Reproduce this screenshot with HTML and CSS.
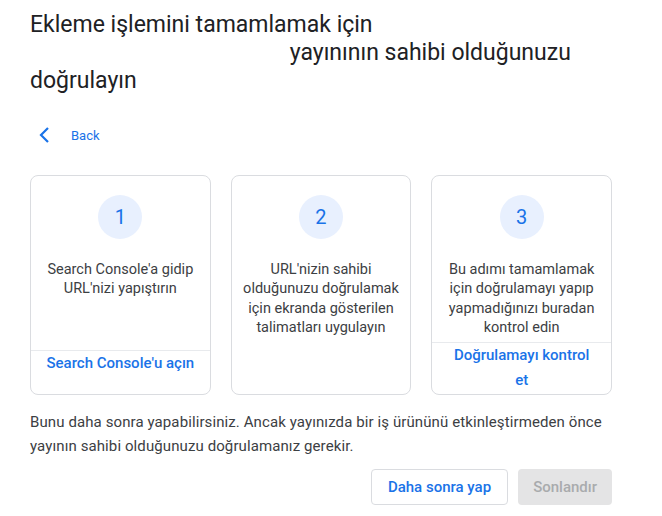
FILE: index.html
```html
<!DOCTYPE html>
<html lang="tr">
<head>
    <meta charset="UTF-8">
    <title>Yayın doğrulama</title>
    <meta name="viewport" content="width=device-width, initial-scale=1.0">
    <link rel="stylesheet" href="styles.css">
</head>
<body>
    <div class="container">
        <h2 class="title">Ekleme işlemini tamamlamak için <span class="pub-name"></span> yayınının sahibi olduğunuzu doğrulayın</h2>

        <a class="back" href="#">
            <svg width="12" height="18" viewBox="0 0 12 18" aria-hidden="true">
                <path d="M10 2 L3 9 L10 16" fill="none" stroke="#1a73e8" stroke-width="2.2"/>
            </svg>
            <span>Back</span>
        </a>

        <div class="steps">
            <div class="step">
                <div class="step-body">
                    <div class="step-num">1</div>
                    <p class="step-text">Search Console'a gidip URL'nizi yapıştırın</p>
                </div>
                <a class="step-link" href="#">Search Console'u açın</a>
            </div>
            <div class="step">
                <div class="step-body">
                    <div class="step-num">2</div>
                    <p class="step-text">URL'nizin sahibi olduğunuzu doğrulamak için ekranda gösterilen talimatları uygulayın</p>
                </div>
            </div>
            <div class="step">
                <div class="step-body">
                    <div class="step-num">3</div>
                    <p class="step-text">Bu adımı tamamlamak için doğrulamayı yapıp yapmadığınızı buradan kontrol edin</p>
                </div>
                <a class="step-link" href="#">Doğrulamayı kontrol et</a>
            </div>
        </div>

        <p class="note">Bunu daha sonra yapabilirsiniz. Ancak yayınızda bir iş ürününü etkinleştirmeden önce yayının sahibi olduğunuzu doğrulamanız gerekir.</p>

        <div class="actions">
            <button class="btn btn-outline">Daha sonra yap</button>
            <button class="btn btn-disabled" disabled>Sonlandır</button>
        </div>
    </div>
</body>
</html>
```

FILE: styles.css
```css
body { margin: 0; background: #fff; font-family: Roboto, "Liberation Sans", Arial, sans-serif; color: #3c4043; }
.container { width: 582px; padding-left: 30px; }

.title { margin: 11px 0 0; font-size: 23px; line-height: 28px; font-weight: 400; color: #202124; }
.pub-name { display: inline-block; width: 254px; height: 1px; }

.back { display: flex; align-items: center; height: 36px; margin-top: 22px; text-decoration: none; color: #1a73e8; font-size: 13px; }
.back svg { margin-left: 8px; }
.back span { margin-left: 21px; }

.steps { display: grid; grid-template-columns: repeat(3, 1fr); gap: 20px; width: 582px; margin-top: 22px; }
.step { display: flex; flex-direction: column; border: 1px solid #dadce0; border-radius: 8px; }
.step-body { flex: 1; padding: 19px 4px 4px; }
.step-num { width: 44px; height: 44px; margin: 0 auto; border-radius: 50%; background: #e8f0fe; color: #1a73e8; font-size: 20px; line-height: 44px; text-align: center; }
.step-text { margin: 21px 0 0; font-size: 14.5px; line-height: 19.4px; text-align: center; color: #3c4043; }
.step-link { box-sizing: border-box; min-height: 44px; padding: 0 14px 1px; border-top: 1px solid #e8eaed; color: #1a73e8; font-size: 15px; font-weight: 500; line-height: 25px; text-align: center; text-decoration: none; }

.note { margin: 15px 0 0; font-size: 15px; line-height: 24px; letter-spacing: 0.1px; color: #3c4043; }

.actions { display: flex; justify-content: flex-end; gap: 10px; margin-top: 11px; }
.btn { height: 36px; padding: 0 16px; border-radius: 4px; font-family: inherit; font-size: 15px; font-weight: 500; }
.btn-outline { background: #fff; border: 1px solid #dadce0; color: #1a73e8; }
.btn-disabled { background: #e4e4e5; border: none; color: #a9abad; padding: 0 15px; }
```
